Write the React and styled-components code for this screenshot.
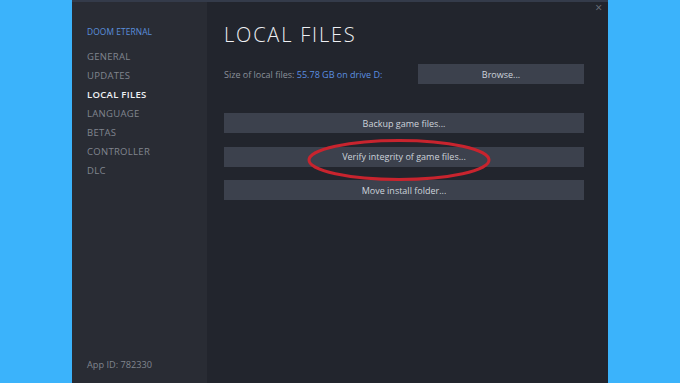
import React from "react";
import styled, { createGlobalStyle } from "styled-components";

const Global = createGlobalStyle`
  html, body { margin: 0; padding: 0; background: #3bb3fb; }
  body { font-family: "Open Sans", "Noto Sans", sans-serif; }
`;

const Stage = styled.div`
  width: 680px;
  height: 383px;
  display: flex;
  justify-content: flex-start;
  padding-left: 72px;
  box-sizing: border-box;
  overflow: hidden;
`;

const Dialog = styled.div`
  width: 536px;
  height: 383px;
  display: flex;
  background: #22252d;
  border-top: 2px solid #343b4a;
  box-sizing: border-box;
  position: relative;
`;

const Sidebar = styled.nav`
  width: 135px;
  background: #292c34;
  display: flex;
  flex-direction: column;
  padding: 24px 0 11px 15px;
  box-sizing: border-box;
`;

const GameTitle = styled.div`
  font-size: 8.4px;
  color: #5b8fdc;
  letter-spacing: 0.1px;
  line-height: 12px;
  margin-bottom: 9px;
`;

const NavItem = styled.div`
  font-size: 9.5px;
  line-height: 19px;
  letter-spacing: 0.3px;
  color: ${p => (p.$active ? "#f0f2f5" : "#80858f")};
  font-weight: ${p => (p.$active ? 600 : 400)};
`;

const AppId = styled.div`
  margin-top: auto;
  font-size: 9.2px;
  color: #80858f;
  line-height: 14px;
`;

const Main = styled.main`
  flex: 1;
  padding: 20px 24px 0 17px;
  display: flex;
  flex-direction: column;
  position: relative;
`;

const Heading = styled.h1`
  margin: 0;
  font-size: 20px;
  font-weight: 300;
  letter-spacing: 1.8px;
  color: #eef0f3;
  line-height: 26px;
`;

const SizeRow = styled.div`
  display: flex;
  align-items: center;
  justify-content: space-between;
  margin-top: 16px;
`;

const SizeText = styled.div`
  font-size: 9px;
  color: #8a909a;
`;

const SizeValue = styled.span`
  color: #5b8fe0;
`;

const Button = styled.div`
  height: 20px;
  width: ${p => p.$w || "auto"};
  background: #3c414d;
  color: #cdd3db;
  font-size: 9px;
  display: flex;
  align-items: center;
  justify-content: center;
  box-sizing: border-box;
`;

const ButtonStack = styled.div`
  display: flex;
  flex-direction: column;
  gap: 13.5px;
  margin-top: 29px;
`;

const Close = styled.div`
  position: absolute;
  right: 6px;
  top: 0px;
  color: #6f747d;
  font-size: 12px;
  line-height: 12px;
`;

const Annotation = styled.svg`
  position: absolute;
  left: 98px;
  top: 135px;
  pointer-events: none;
`;

export default function App() {
  const nav = ["GENERAL", "UPDATES", "LOCAL FILES", "LANGUAGE", "BETAS", "CONTROLLER", "DLC"];
  return (
    <>
      <Global />
      <Stage>
        <Dialog>
          <Sidebar>
            <GameTitle>DOOM ETERNAL</GameTitle>
            {nav.map(n => (
              <NavItem key={n} $active={n === "LOCAL FILES"}>{n}</NavItem>
            ))}
            <AppId>App ID: 782330</AppId>
          </Sidebar>
          <Main>
            <Heading>LOCAL FILES</Heading>
            <SizeRow>
              <SizeText>
                Size of local files: <SizeValue>55.78 GB on drive D:</SizeValue>
              </SizeText>
              <Button $w="166px">Browse...</Button>
            </SizeRow>
            <ButtonStack>
              <Button>Backup game files...</Button>
              <Button>Verify integrity of game files...</Button>
              <Button>Move install folder...</Button>
            </ButtonStack>
            <Annotation width="188" height="46" viewBox="0 0 188 46">
              <ellipse cx="94" cy="23" rx="90" ry="19.5" fill="none" stroke="#c8242e" strokeWidth="3" />
            </Annotation>
          </Main>
          <Close>×</Close>
        </Dialog>
      </Stage>
    </>
  );
}
